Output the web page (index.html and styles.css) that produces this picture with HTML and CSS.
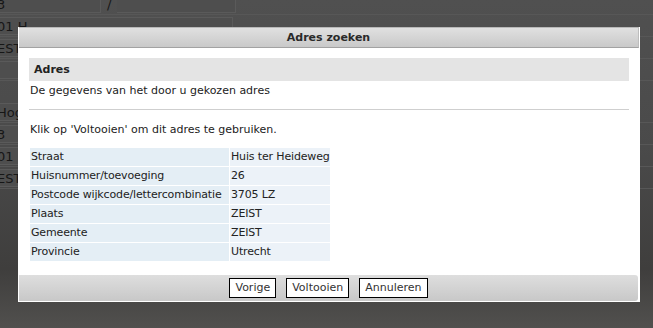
FILE: index.html
```html
<!DOCTYPE html>
<html>
<head>
<meta charset="utf-8">
<link rel="stylesheet" href="styles.css">
</head>
<body>
<div class="page">
  <div class="bg-group">
    <div class="bg-row">
      <span class="bg-field w100"><span class="bg-text">3</span></span>
      <span class="bg-sep">/</span>
      <span class="bg-field w118"></span>
    </div>
    <div class="bg-row"><span class="bg-field w232"><span class="bg-text">01 H</span></span></div>
    <div class="bg-row"><span class="bg-field w232"><span class="bg-text">EST</span></span></div>
    <div class="bg-row"><span class="bg-field w232"></span></div>
  </div>
  <div class="bg-group second">
    <div class="bg-row"><span class="bg-field w232"><span class="bg-text">Hog</span></span></div>
    <div class="bg-row"><span class="bg-field w232"><span class="bg-text">3</span></span></div>
    <div class="bg-row"><span class="bg-field w232"><span class="bg-text">01 H</span></span></div>
    <div class="bg-row"><span class="bg-field w232"><span class="bg-text">EST</span></span></div>
  </div>
</div>

<div class="dialog">
  <div class="dialog-title">Adres zoeken</div>
  <div class="dialog-body">
    <div class="section-head">Adres</div>
    <p class="intro">De gegevens van het door u gekozen adres</p>
    <hr class="divider">
    <p class="hint">Klik op 'Voltooien' om dit adres te gebruiken.</p>
    <table class="addr">
      <tr><td class="k">Straat</td><td class="v">Huis ter Heideweg</td></tr>
      <tr><td class="k">Huisnummer/toevoeging</td><td class="v">26</td></tr>
      <tr><td class="k">Postcode wijkcode/lettercombinatie</td><td class="v">3705 LZ</td></tr>
      <tr><td class="k">Plaats</td><td class="v">ZEIST</td></tr>
      <tr><td class="k">Gemeente</td><td class="v">ZEIST</td></tr>
      <tr><td class="k">Provincie</td><td class="v">Utrecht</td></tr>
    </table>
  </div>
  <div class="dialog-foot">
    <button class="btn">Vorige</button>
    <button class="btn">Voltooien</button>
    <button class="btn">Annuleren</button>
  </div>
</div>
</body>
</html>
```
FILE: styles.css
```css
html, body {
  margin: 0;
  padding: 0;
}
body {
  width: 653px;
  height: 328px;
  overflow: hidden;
  position: relative;
  background: linear-gradient(180deg, #505050 0%, #4a4a4a 45%, #3f3e3d 82%, #51504e 100%);
  font-family: "DejaVu Sans", Verdana, sans-serif;
  font-size: 11px;
  color: #222;
}

/* dimmed page behind the dialog */
.page {
  display: flex;
  flex-direction: column;
  margin-top: -6px;
}
.bg-group {
  display: flex;
  flex-direction: column;
  gap: 1px;
}
.bg-group.second {
  margin-top: 21px;
}
.bg-row {
  display: flex;
  align-items: center;
  gap: 6px;
  height: 20px;
  border-bottom: 1px solid #575757;
}
.bg-field {
  display: flex;
  align-items: center;
  height: 18px;
  border: 1px solid #5a5a5a;
  border-left: none;
  box-sizing: border-box;
  background: #4e4e4e;
}
.w100 { width: 101px; }
.w118 { width: 119px; }
.w232 { width: 233px; }
.bg-text {
  margin-left: -3px;
  font-size: 13px;
  color: #161616;
}
.bg-sep {
  font-size: 13px;
  color: #161616;
}

/* dialog */
.dialog {
  position: absolute;
  left: 18px;
  top: 27px;
  width: 622px;
  height: 275px;
  box-sizing: border-box;
  background: #fff;
  border-left: 1px solid #fff;
  border-right: 1px solid #fff;
  border-bottom: 1px solid #fff;
  display: flex;
  flex-direction: column;
}
.dialog-title {
  box-sizing: border-box;
  height: 21px;
  line-height: 19px;
  text-align: center;
  font-weight: bold;
  font-size: 11px;
  color: #2a2a2a;
  background: linear-gradient(180deg, #e0e0e0, #c9c9c9);
  border-top: 1px solid #b8b8b8;
  border-bottom: 1px solid #a2a2a2;
  border-right: 1px solid #bdbdbd;
}
.dialog-body {
  flex: 1;
  padding: 10px 10px 0 10px;
}
.section-head {
  height: 23px;
  line-height: 24px;
  background: #e4e4e4;
  font-weight: bold;
  padding-left: 5px;
  color: #222;
}
.intro {
  margin: 0;
  height: 20px;
  line-height: 20px;
  padding-left: 1px;
}
.divider {
  margin: 8px 0 0 0;
  border: none;
  border-top: 1px solid #cfcfcf;
  height: 0;
}
.hint {
  margin: 0;
  height: 38px;
  line-height: 40px;
  padding-left: 1px;
}
.addr {
  border-collapse: separate;
  border-spacing: 1px;
  margin-top: -1px;
  table-layout: fixed;
  width: 302px;
  letter-spacing: -0.15px;
}
.addr td {
  height: 18px;
  padding: 0 1px;
  line-height: 18px;
  white-space: nowrap;
  overflow: hidden;
}
.addr .k {
  width: 197px;
  background: #e4eef5;
}
.addr .v {
  background: #ecf2f8;
}

.dialog-foot {
  height: 26px;
  margin-right: 1px;
  background: linear-gradient(180deg, #dedede, #c8c8c8);
  border-radius: 0 3px 3px 0;
  display: flex;
  justify-content: center;
  align-items: center;
  gap: 10px;
}
.btn {
  height: 20px;
  padding: 0 5px;
  border: 1px solid #000;
  background: #fff;
  font-family: "DejaVu Sans", Verdana, sans-serif;
  font-size: 11px;
  color: #333;
  line-height: 18px;
  border-radius: 0;
}
```
